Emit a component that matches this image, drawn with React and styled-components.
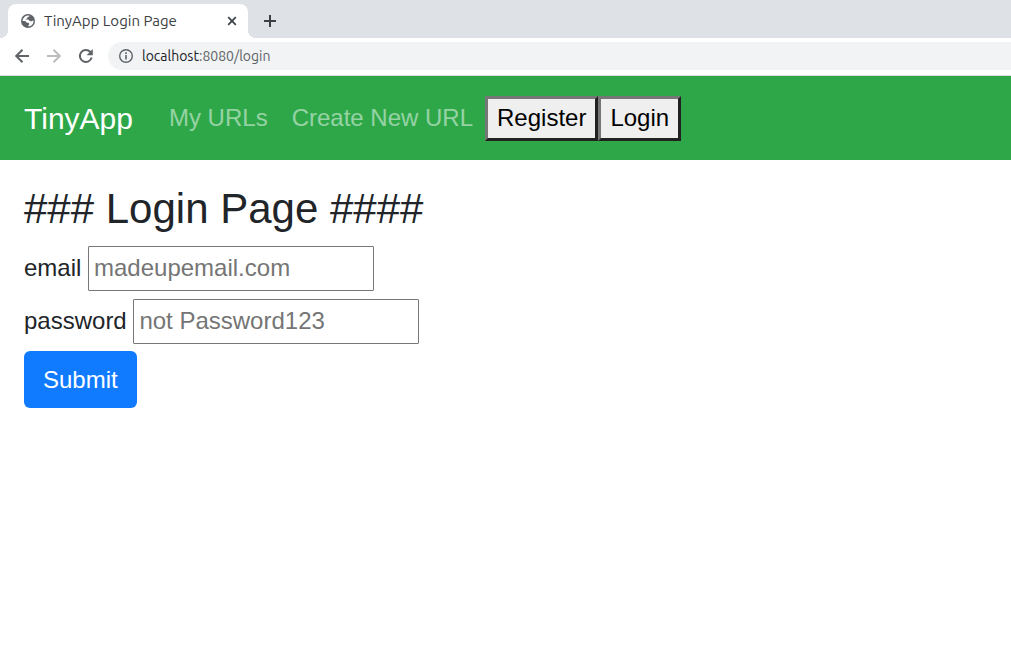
import React from 'react';
import styled, { createGlobalStyle } from 'styled-components';

const GlobalStyle = createGlobalStyle`
  *, *::before, *::after { box-sizing: border-box; }
  body {
    margin: 0;
    background: #fff;
    color: #212529;
    font-family: "Liberation Sans", Arial, sans-serif;
    font-size: 24px;
    line-height: 36px;
  }
`;

const BrowserChrome = styled.div`
  font-family: Ubuntu, "Noto Sans", sans-serif;
  color: #5f6368;
  border-bottom: 1px solid #dadce0;
`;

const TabStrip = styled.div`
  display: flex;
  align-items: flex-end;
  height: 38px;
  padding-left: 8px;
  background: #dee1e6;
`;

const Tab = styled.div`
  display: flex;
  align-items: center;
  position: relative;
  width: 240px;
  height: 34px;
  padding: 0 8px 0 12px;
  background: #fff;
  border-radius: 8px 8px 0 0;

  &::before, &::after {
    content: "";
    position: absolute;
    bottom: 0;
    width: 8px;
    height: 8px;
  }
  &::before {
    left: -8px;
    background: radial-gradient(circle at 0 0, transparent 8px, #fff 8px);
  }
  &::after {
    right: -8px;
    background: radial-gradient(circle at 100% 0, transparent 8px, #fff 8px);
  }
`;

const TabTitle = styled.span`
  flex: 1;
  margin-left: 8px;
  font-size: 15px;
  line-height: 20px;
  color: #3c4043;
  white-space: nowrap;
`;

const IconButton = styled.button`
  display: flex;
  align-items: center;
  justify-content: center;
  width: ${({ $size }) => $size}px;
  height: ${({ $size }) => $size}px;
  padding: 0;
  border: 0;
  background: none;
  color: ${({ $color }) => $color || '#5f6368'};
`;

const NewTab = styled(IconButton)`
  margin: 0 0 3px 8px;
`;

const LineIcon = styled.svg.attrs({ width: 16, height: 16, viewBox: '0 0 16 16', 'aria-hidden': true })`
  flex: none;
  fill: none;
  stroke: currentColor;
  stroke-width: 2;
`;

const Toolbar = styled.div`
  display: flex;
  align-items: center;
  gap: 4px;
  height: 37px;
  padding: 0 0 1px 8px;
`;

const AddressBar = styled.div`
  display: flex;
  flex: 1;
  align-items: center;
  gap: 8px;
  height: 28px;
  margin-left: 4px;
  padding-left: 10px;
  background: #f1f3f4;
  border-radius: 14px 0 0 14px;
  font-size: 14px;
  line-height: 20px;
`;

const Host = styled.span`
  color: #202124;
`;

const Navbar = styled.nav`
  display: flex;
  align-items: center;
  min-height: 84px;
  padding: 12px 24px;
  background: #2ea749;
`;

const Brand = styled.a`
  margin-right: 24px;
  color: #fff;
  font-size: 30px;
  line-height: 45px;
  text-decoration: none;
`;

const NavLink = styled.a`
  padding: 12px;
  color: rgba(255, 255, 255, 0.5);
  text-decoration: none;
`;

const NavButton = styled.button`
  height: 45px;
  padding: 0 9px;
  border: 3px solid;
  border-color: #767676 #212121 #212121 #767676;
  background: #efefef;
  color: #000;
  font: inherit;
`;

const Page = styled.main`
  padding: 24px;
`;

const Title = styled.h3`
  margin: 0 0 12px;
  font-size: 42px;
  font-weight: 400;
  line-height: 50px;
`;

const Form = styled.form`
  display: flex;
  flex-direction: column;
  align-items: flex-start;
`;

const Field = styled.div`
  margin-bottom: ${({ $gap }) => $gap}px;
`;

const TextInput = styled.input`
  width: 286px;
  height: 45px;
  padding: 0 5px 1px;
  border: 1px solid #767676;
  border-radius: 1px;
  background: #fff;
  font: inherit;

  &::placeholder { color: #757575; opacity: 1; }
`;

const SubmitButton = styled.button`
  padding: 9px 19px;
  border: 0;
  border-radius: 6px;
  background: #107bff;
  color: #fff;
  font: inherit;
  line-height: 39px;
`;

const Globe = () => (
  <svg width="16" height="16" viewBox="0 0 16 16" aria-hidden="true">
    <circle cx="8" cy="8" r="7" fill="#5f6368" />
    <path
      d="M9.6 2.7c-.2 1-1 1.1-1.8 1.1-.5.8-.1 1.4-.8 1.8-.7.3-1.3.2-1.3 1h2.2c1.1 0 1.3 1.6 2.3 1.6h1.2c.5 0 .7-.8 1.8-.8.4 0 .4.4.4.6a5.5 5.5 0 0 1-5.1 5.5V12c.8-.2 1-1 .5-1.7-.8-1-2.1.1-2.6-1-.4-1-1.5-1.2-2.6-1.2H2.5a5.6 5.6 0 0 1 7.1-5.4z"
      fill="#fff"
    />
  </svg>
);

export default function App() {
  return (
    <>
      <GlobalStyle />
      <BrowserChrome>
        <TabStrip>
          <Tab>
            <Globe />
            <TabTitle>TinyApp Login Page</TabTitle>
            <IconButton $size={16} $color="#3c4043" aria-label="Close tab">
              <LineIcon><path d="M4.2 4.2l7.6 7.6M11.8 4.2l-7.6 7.6" strokeWidth="1.7" /></LineIcon>
            </IconButton>
          </Tab>
          <NewTab $size={28} $color="#3c4043" aria-label="New tab">
            <LineIcon><path d="M8 2v12M2 8h12" /></LineIcon>
          </NewTab>
        </TabStrip>
        <Toolbar>
          <IconButton $size={28} aria-label="Back">
            <LineIcon><path d="M15 8H2.5M8.5 1.7L2.2 8l6.3 6.3" /></LineIcon>
          </IconButton>
          <IconButton $size={28} $color="#babcbe" aria-label="Forward">
            <LineIcon><path d="M1 8h12.5M7.5 1.7L13.8 8l-6.3 6.3" /></LineIcon>
          </IconButton>
          <IconButton $size={28} aria-label="Reload">
            <LineIcon>
              <path d="M13.7 9.5A6 6 0 1 1 12.2 3.8l1 1" />
              <path d="M14.8 1v6.2H8.6z" fill="currentColor" stroke="none" />
            </LineIcon>
          </IconButton>
          <AddressBar>
            <LineIcon>
              <circle cx="8" cy="8" r="6.3" strokeWidth="1.4" />
              <path d="M8 7v4.5M8 4.3v1.6" strokeWidth="1.6" />
            </LineIcon>
            <span><Host>localhost</Host>:8080/login</span>
          </AddressBar>
        </Toolbar>
      </BrowserChrome>
      <Navbar>
        <Brand href="#">TinyApp</Brand>
        <NavLink href="#urls">My URLs</NavLink>
        <NavLink href="#new">Create New URL</NavLink>
        <NavButton type="button">Register</NavButton>
        <NavButton type="button">Login</NavButton>
      </Navbar>
      <Page>
        <Title>### Login Page ####</Title>
        <Form onSubmit={(event) => event.preventDefault()}>
          <Field $gap={8}>
            <label htmlFor="email">email</label>{' '}
            <TextInput id="email" type="email" placeholder="madeupemail.com" />
          </Field>
          <Field $gap={7}>
            <label htmlFor="password">password</label>{' '}
            <TextInput id="password" type="password" placeholder="not Password123" />
          </Field>
          <SubmitButton type="submit">Submit</SubmitButton>
        </Form>
      </Page>
    </>
  );
}
